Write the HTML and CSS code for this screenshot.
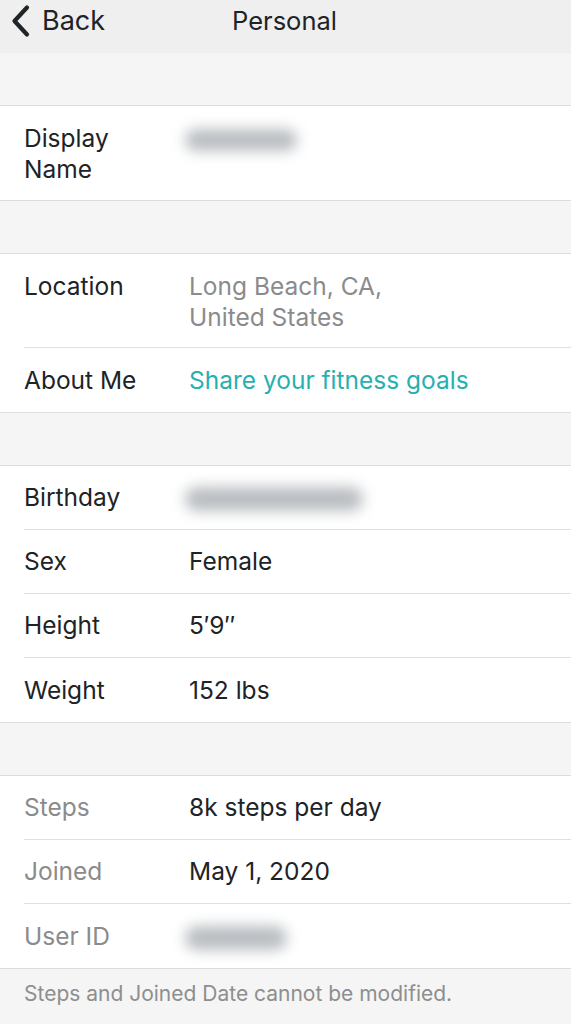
FILE: index.html
```html
<!DOCTYPE html>
<html>
<head>
<meta charset="utf-8">
<link rel="stylesheet" href="styles.css">
</head>
<body>
<header class="nav">
  <div class="back">
    <svg class="chev" width="22" height="34" viewBox="0 0 22 34"><path d="M17 3.5 L4.5 17 L17 30.5" fill="none" stroke="#1f2426" stroke-width="4.2" stroke-linecap="round" stroke-linejoin="round"/></svg>
    <span>Back</span>
  </div>
  <div class="title">Personal</div>
</header>
<div class="gap"></div>
<section class="group">
  <div class="row tall">
    <div class="label">Display<br>Name</div>
    <div class="value"><span class="blur b1"></span></div>
  </div>
</section>
<div class="gap"></div>
<section class="group">
  <div class="row tall">
    <div class="label">Location</div>
    <div class="value muted">Long Beach, CA,<br>United States</div>
  </div>
  <div class="row">
    <div class="label">About Me</div>
    <div class="value teal">Share your fitness goals</div>
  </div>
</section>
<div class="gap"></div>
<section class="group">
  <div class="row">
    <div class="label">Birthday</div>
    <div class="value"><span class="blur b2"></span></div>
  </div>
  <div class="row">
    <div class="label">Sex</div>
    <div class="value">Female</div>
  </div>
  <div class="row">
    <div class="label">Height</div>
    <div class="value">5′9″</div>
  </div>
  <div class="row">
    <div class="label">Weight</div>
    <div class="value">152 lbs</div>
  </div>
</section>
<div class="gap"></div>
<section class="group">
  <div class="row">
    <div class="label muted">Steps</div>
    <div class="value">8k steps per day</div>
  </div>
  <div class="row">
    <div class="label muted">Joined</div>
    <div class="value">May 1, 2020</div>
  </div>
  <div class="row">
    <div class="label muted">User ID</div>
    <div class="value"><span class="blur b3"></span></div>
  </div>
</section>
<p class="note">Steps and Joined Date cannot be modified.</p>
</body>
</html>
```
FILE: styles.css
```css
* { box-sizing: border-box; }
html, body { margin: 0; padding: 0; }
body {
  width: 571px;
  height: 1024px;
  overflow: hidden;
  background: #f5f5f5;
  font-family: Inter, "Noto Sans", sans-serif;
  color: #1d2326;
  font-size: 24.5px;
}
.nav {
  height: 53px;
  background: #efefef;
  display: flex;
  align-items: flex-start;
  position: relative;
}
.back {
  display: flex;
  align-items: center;
  padding-left: 10px;
  padding-top: 4px;
  gap: 10px;
  font-size: 27px;
  line-height: 34px;
}
.title {
  position: absolute;
  left: 0; right: 0;
  text-align: center;
  font-size: 25.5px;
  top: 4px;
  line-height: 34px;
  padding-right: 2px;
  pointer-events: none;
}
.gap {
  height: 53px;
  border-bottom: 1px solid #dcdcdc;
}
.group {
  background: #fff;
  border-bottom: 1px solid #dcdcdc;
}
.row {
  display: flex;
  align-items: center;
  height: 64px;
  margin-left: 24px;
  border-bottom: 1px solid #e0e0e0;
}
.row:last-child { border-bottom: none; }
.row.tall { height: 94px; align-items: flex-start; padding-top: 17px; }
.label {
  width: 165px;
  line-height: 31px;
}
.value { line-height: 31px; }
.muted { color: #8b8b8b; }
.teal { color: #27b0b0; }
.blur {
  display: inline-block;
  background: #b9bdc1;
  border-radius: 14px;
  filter: blur(7px);
  vertical-align: middle;
}
.b1 { width: 112px; height: 22px; margin-left: -4px; }
.b2 { width: 178px; height: 24px; margin-left: -4px; }
.b3 { width: 102px; height: 24px; margin-left: -4px; }
.note {
  margin: 0;
  padding: 12px 24px 0;
  color: #8e8e8e;
  font-size: 21px;
}
```
